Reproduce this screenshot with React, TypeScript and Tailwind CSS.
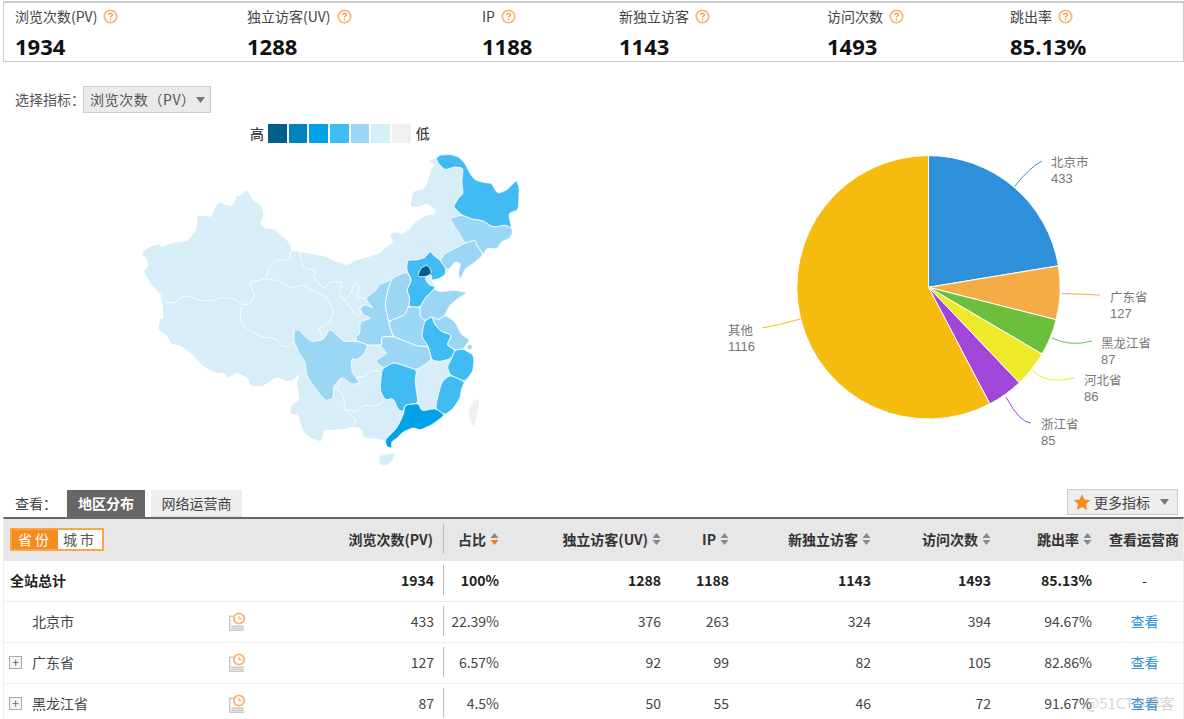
import React from 'react';

const CJK = '"Noto Sans CJK SC", "Noto Sans", sans-serif';

const stats = [
  { name: '浏览次数(PV)', value: '1934' },
  { name: '独立访客(UV)', value: '1288' },
  { name: 'IP', value: '1188' },
  { name: '新独立访客', value: '1143' },
  { name: '访问次数', value: '1493' },
  { name: '跳出率', value: '85.13%' },
];

const legend = ['#005f8b', '#0082bd', '#00a3e8', '#40bcf2', '#9bd7f5', '#d7edf8', '#f0f0f0'];

// 地图坐标按 3 倍放大量取，viewBox 1200x990
const L1 = '#d7edf8';
const L2 = '#9bd7f5';
const L3 = '#40bcf2';

function toPoints(s: string) {
  return s.trim().split(/\s+/).map((p) => p.split(',').map(Number));
}

// 只磨圆拐角，相邻省份的公共边保持重合
function smooth(s: string, closed: boolean) {
  const pts = toPoints(s);
  const n = pts.length;
  const lerp = (a: number[], b: number[]) => `${a[0] + (b[0] - a[0]) * 0.25} ${a[1] + (b[1] - a[1]) * 0.25}`;
  let d = '';
  if (closed) {
    pts.forEach((p, i) => {
      const prev = pts[(i + n - 1) % n];
      const next = pts[(i + 1) % n];
      d += `${i === 0 ? 'M' : 'L'}${lerp(p, prev)}Q${p[0]} ${p[1]} ${lerp(p, next)}`;
    });
    return d + 'Z';
  }
  d = `M${pts[0][0]} ${pts[0][1]}`;
  for (let i = 1; i < n - 1; i++) {
    d += `L${lerp(pts[i], pts[i - 1])}Q${pts[i][0]} ${pts[i][1]} ${lerp(pts[i], pts[i + 1])}`;
  }
  return d + `L${pts[n - 1][0]} ${pts[n - 1][1]}`;
}

const silhouette =
  '38,320 60,305 85,297 95,305 110,300 130,293 150,292 172,288 185,272 198,255 203,235 200,212 225,212 245,216 250,195 268,170 285,180 305,183 315,170 318,155 335,150 350,135 360,150 368,165 393,180 400,205 398,222 390,235 402,250 430,252 450,268 470,285 482,300 483,318 510,322 550,328 590,335 610,348 640,355 650,362 680,345 720,335 750,325 770,305 790,295 780,268 800,262 820,268 840,250 860,228 890,212 915,208 918,195 890,175 870,185 840,185 850,140 885,130 895,105 905,70 915,58 895,50 918,40 930,30 960,28 985,35 1005,55 1020,85 1035,105 1060,112 1085,115 1095,135 1105,145 1130,135 1145,120 1160,105 1168,130 1165,195 1135,205 1145,250 1148,262 1140,280 1115,290 1100,312 1070,310 1060,330 1030,355 1005,372 1000,385 990,405 985,385 992,355 975,350 960,370 945,390 925,402 905,405 915,425 912,432 930,440 975,435 1012,443 985,460 960,480 945,510 975,530 995,570 1020,585 1008,600 1000,612 1030,630 1032,650 1028,680 1005,710 995,730 990,760 970,790 945,810 905,840 870,855 850,848 820,860 800,880 785,890 785,910 770,905 765,885 745,882 700,878 695,850 665,845 640,852 610,855 580,855 575,890 545,880 520,860 505,810 480,805 485,780 510,765 500,720 510,685 490,705 470,708 440,695 400,722 360,722 355,700 320,682 290,700 285,685 250,682 215,660 190,630 150,600 125,598 110,570 85,555 90,520 100,525 100,490 90,445 65,420 40,378 55,365 50,340 38,330';

const borders = [
  '483,318 478,345 440,345 415,372 410,402 355,412 375,450 360,478 335,478 310,460 275,458 245,468 200,465 185,455 160,455 130,475 105,470 90,445',
  '335,478 330,520 345,548 395,575 440,582 455,605 475,605 492,590',
  '410,402 450,408 485,430 520,420 555,440 595,458 612,510 585,545 565,545 580,585',
  '510,322 520,370 560,375 548,398 585,432 600,410 640,412 625,440 640,465 665,490 680,515 695,505 685,490 705,478',
  '640,465 655,458 675,415 690,420 680,455 705,460',
  '635,695 620,730 640,750 645,795 680,825 665,845',
  '645,795 680,800 700,780 735,785 765,765',
  '690,715 680,695 700,695 725,675 750,680',
];

const provinces: { fill: string; pts: string }[] = [
  { fill: L3, pts: '918,40 930,30 960,28 985,35 1005,55 1020,85 1035,105 1060,112 1085,115 1095,135 1105,145 1130,135 1145,120 1160,105 1168,130 1165,195 1135,205 1145,250 1125,240 1105,245 1085,245 1060,228 1045,225 1025,222 995,210 970,185 985,160 1000,145 995,110 1000,70 975,65 945,75 925,55' },
  { fill: L2, pts: '960,220 995,210 1025,222 1045,225 1060,228 1085,245 1105,245 1125,240 1145,250 1148,262 1140,280 1115,290 1100,312 1070,310 1060,330 1040,300 1035,285 1005,295 985,260 970,240' },
  { fill: L2, pts: '1005,295 1035,285 1040,300 1060,330 1030,355 1005,372 1000,385 990,405 985,385 992,355 975,350 960,370 948,372 930,345 945,325' },
  { fill: L3, pts: '830,375 832,345 860,345 885,338 900,318 915,335 930,345 948,372 945,390 925,402 905,405 915,425 912,432 885,460 870,487 835,485 840,460 830,435 845,405' },
  { fill: L2, pts: '785,400 830,380 845,405 830,435 840,460 835,485 825,510 775,530 765,480 772,440' },
  { fill: L2, pts: '705,460 740,435 745,420 775,408 785,400 772,440 765,480 775,530 790,575 755,575 755,600 715,600 678,588 678,575 690,565 690,530 725,520 700,510 690,490 705,478 730,490' },
  { fill: L2, pts: '870,487 885,460 912,432 930,440 975,435 1012,443 985,460 960,480 945,510 925,525 905,515 885,528 870,515' },
  { fill: L2, pts: '775,530 825,510 835,485 870,487 870,515 885,528 900,530 880,545 875,575 895,605 860,603 830,590 790,575' },
  { fill: L2, pts: '905,515 925,525 945,510 975,530 995,570 1020,585 1008,600 1000,612 975,615 950,600 965,570 935,560 915,540' },
  { fill: L3, pts: '885,528 905,515 915,540 935,560 965,570 950,600 975,615 965,640 930,650 905,645 895,605 875,575 880,545' },
  { fill: L2, pts: '755,600 755,575 790,575 830,590 860,603 895,605 905,645 860,675 830,665 790,652 760,670 735,648 772,625 750,600' },
  { fill: L2, pts: '492,555 510,555 520,570 545,590 580,585 600,550 640,590 678,588 715,600 700,630 680,645 665,640 665,680 690,715 665,718 635,695 610,725 610,760 585,768 545,715 530,690 525,650 510,630 492,590' },
  { fill: L3, pts: '760,670 790,652 830,665 860,675 855,710 865,775 825,780 820,800 805,795 790,760 765,765 750,735 755,680' },
  { fill: L3, pts: '975,615 1000,612 1030,630 1032,650 1028,680 1005,710 960,690 952,665 965,640' },
  { fill: L3, pts: '960,690 1005,710 995,730 990,760 970,790 945,810 915,790 935,710' },
  { fill: '#00a3e8', pts: '825,780 865,775 875,798 915,790 945,810 905,840 870,855 850,848 820,860 800,880 785,890 785,910 770,905 765,885 800,850 820,810' },
  { fill: L1, pts: '885,397 905,390 905,405 915,425 898,420 890,410' },
  { fill: '#005f8b', pts: '872,370 890,360 900,370 905,385 888,395 862,395' },
  { fill: L1, pts: '750,930 795,922 790,945 765,965 745,955' },
  { fill: '#f0f0f0', pts: '1035,762 1050,762 1045,800 1032,848 1015,825 1015,790' },
];

function ChinaMap() {
  return (
    <svg width="400" height="330" viewBox="0 0 1200 990">
      <path d={smooth(silhouette, true)} fill={L1} />
      {borders.map((b, i) => (
        <path key={i} d={smooth(b, false)} fill="none" stroke="#fff" strokeWidth="2.5" />
      ))}
      {provinces.map((p, i) => (
        <path key={i} d={smooth(p.pts, true)} fill={p.fill} stroke="#fff" strokeWidth="2.5" strokeLinejoin="round" />
      ))}
      <circle cx="1019" cy="606" r="7" fill={L2} />
    </svg>
  );
}

const pieData = [
  { name: '北京市', value: 433, color: '#2e90db' },
  { name: '广东省', value: 127, color: '#f5ac46' },
  { name: '黑龙江省', value: 87, color: '#6bbf3c' },
  { name: '河北省', value: 86, color: '#eeea2a' },
  { name: '浙江省', value: 85, color: '#a047d9' },
  { name: '其他', value: 1116, color: '#f5bb0e' },
];

const pieLabels = [
  { line: 'M295 41Q310 22 322 16', x: 331, y: 22, color: '#2e90db', i: 0 },
  { line: 'M342 148.500L380 150', x: 390, y: 157, color: '#f5ac46', i: 1 },
  { line: 'M332 193Q350 202 372 196', x: 381, y: 203, color: '#6bbf3c', i: 2 },
  { line: 'M312 225Q325 240 354 233', x: 364, y: 240, color: '#eeea2a', i: 3 },
  { line: 'M286 252Q300 278 311 278', x: 321, y: 284, color: '#a047d9', i: 4 },
  { line: 'M80 174Q60 180 42 183', x: 8, y: 190, color: '#f5bb0e', i: 5 },
];

function Pie() {
  const cx = 208.5;
  const cy = 142.3;
  const r = 131.7;
  const total = pieData.reduce((s, p) => s + p.value, 0);
  let acc = 0;
  const wedges = pieData.map((p) => {
    const a0 = (acc / total) * Math.PI * 2;
    acc += p.value;
    const a1 = (acc / total) * Math.PI * 2;
    const large = a1 - a0 > Math.PI ? 1 : 0;
    const d = `M${cx} ${cy}L${cx + r * Math.sin(a0)} ${cy - r * Math.cos(a0)}A${r} ${r} 0 ${large} 1 ${cx + r * Math.sin(a1)} ${cy - r * Math.cos(a1)}Z`;
    return <path key={p.name} d={d} fill={p.color} stroke="#fff" strokeWidth="1" />;
  });
  return (
    <svg width="440" height="310" viewBox="0 0 440 310">
      {wedges}
      {pieLabels.map((l) => (
        <g key={l.i}>
          <path d={l.line} fill="none" stroke={l.color} strokeWidth="1" />
          <text x={l.x} y={l.y} fontSize="12.500" fill="#777" fontFamily={CJK}>
            {pieData[l.i].name}
          </text>
          <text x={l.x} y={l.y + 16} fontSize="13" fill="#777" fontFamily='"Liberation Sans", sans-serif'>
            {pieData[l.i].value}
          </text>
        </g>
      ))}
    </svg>
  );
}

function HelpIcon() {
  return (
    <svg width="15" height="15" viewBox="0 0 15 15" className="ml-[6px] shrink-0">
      <circle cx="7.5" cy="7.500" r="6.200" fill="#fff" stroke="#f9b873" strokeWidth="1.800" />
      <path d="M5.500 6Q5.700 4.300 7.500 4.300Q9.400 4.300 9.400 5.800Q9.400 6.800 8.300 7.300Q7.500 7.700 7.500 8.700" fill="none" stroke="#f0953c" strokeWidth="1.200" />
      <circle cx="7.500" cy="10.600" r=".8" fill="#f0953c" />
    </svg>
  );
}

function SortIcon({ active }: { active?: boolean }) {
  return (
    <svg width="9" height="14" viewBox="0 0 9 14" className="ml-[4px] shrink-0">
      <path d="M.5 6L4.500 1 8.500 6Z" fill="#888" />
      <path d="M.5 8L4.500 13 8.500 8Z" fill={active ? '#f47a20' : '#888'} />
    </svg>
  );
}

function ReportIcon() {
  return (
    <svg width="18" height="20" viewBox="0 0 18 20">
      <path d="M1 3.500H5V5H2.500V17.500H16V19H1Z" fill="#c9c9c9" />
      <path d="M3 13H16V18H3Z" fill="#e4e4e4" />
      <path d="M4 14.500H15M4 16.500H15" stroke="#c9c9c9" strokeWidth="1" />
      <circle cx="11" cy="6.500" r="5.200" fill="#fff" stroke="#f8b36c" strokeWidth="1.800" />
      <path d="M11 3.800V6.800H13.500" fill="none" stroke="#f59a45" strokeWidth="1" />
    </svg>
  );
}

function PlusBox() {
  return (
    <span className="flex h-[13px] w-[13px] items-center justify-center border border-[#aaa] bg-[#f4f4f4] text-[12px] leading-none text-[#666]">
      +
    </span>
  );
}

const rows = [
  { name: '北京市', plus: false, pv: '433', share: '22.39%', uv: '376', ip: '263', nuv: '324', visits: '394', bounce: '94.67%' },
  { name: '广东省', plus: true, pv: '127', share: '6.57%', uv: '92', ip: '99', nuv: '82', visits: '105', bounce: '82.86%' },
  { name: '黑龙江省', plus: true, pv: '87', share: '4.5%', uv: '50', ip: '55', nuv: '46', visits: '72', bounce: '91.67%' },
];

const gridCols = 'grid grid-cols-[220px_30px_189px_56px_162px_68px_142px_120px_101px_91px] items-center';

function HeadCell({ children, active }: { children: React.ReactNode; active?: boolean }) {
  return (
    <div className="flex items-center justify-end">
      {children}
      <SortIcon active={active} />
    </div>
  );
}

function Divider({ children }: { children: React.ReactNode }) {
  return <div className="flex h-[30px] items-center justify-end border-l border-[#bbb]">{children}</div>;
}

export default function App() {
  return (
    <div className="relative h-[719px] w-[1184px] overflow-hidden bg-white text-[#333]" style={{ fontFamily: CJK }}>
      {/* 顶部统计 */}
      <div className="ml-[3px] mt-[1px] grid h-[61px] w-[1181px] grid-cols-[232px_235px_137px_208px_183px_1fr] border border-t-2 border-[#ccc] pl-[11px]">
        {stats.map((s) => (
          <div key={s.name} className="flex flex-col">
            <div className="mt-[3px] flex h-[20px] items-center text-[14px] text-[#444]">
              {s.name}
              <HelpIcon />
            </div>
            <div className="mt-[6px] text-[22px] font-bold leading-[28px] text-[#111]" style={{ fontFamily: '"Open Sans", sans-serif' }}>
              {s.value}
            </div>
          </div>
        ))}
      </div>

      {/* 选择指标 */}
      <div className="ml-[15px] mt-[24px] flex h-[27px] items-center text-[14px] text-[#555]">
        <span className="w-[68px] whitespace-nowrap">选择指标：</span>
        <div className="flex h-[27px] w-[128px] items-center justify-between border border-[#ccc] bg-[#eaeaea] pl-[6px] pr-[9px] text-[14px] tracking-[0.6px] text-[#555]">
          <span className="whitespace-nowrap">浏览次数（PV）</span>
          <svg width="9" height="6" viewBox="0 0 9 6" className="shrink-0">
            <path d="M0 0H9L4.500 6Z" fill="#777" />
          </svg>
        </div>
      </div>

      {/* 地图和饼图 */}
      <div className="mt-[10px] flex h-[362px]">
        <div className="ml-[130px] w-[590px]">
          <div className="flex h-[22px] items-center pb-[1px]">
            <span className="mb-[2px] ml-[120px] mr-[4px] text-[14px] font-medium leading-none text-[#444]">高</span>
            <div className="flex gap-[2px]">
              {legend.map((c) => (
                <span key={c} className="h-[19px] w-[18.7px]" style={{ background: c }} />
              ))}
            </div>
            <span className="mb-[2px] ml-[5px] text-[14px] font-medium leading-none text-[#444]">低</span>
          </div>
          <ChinaMap />
        </div>
        <div className="pt-[22px]">
          <Pie />
        </div>
      </div>

      {/* 标签 */}
      <div className="ml-[15px] mr-[6px] mt-[4px] flex h-[28px] items-end justify-between">
        <div className="flex items-end">
          <span className="mb-[3px] w-[52px] whitespace-nowrap text-[14px] text-[#444]">查看：</span>
          <div className="flex h-[27px] w-[78px] items-center justify-center bg-[#666] text-[14px] font-bold text-white">地区分布</div>
          <div className="ml-[6px] flex h-[27px] w-[91px] items-center justify-center border-b border-[#ddd] bg-[#eee] text-[14px] text-[#444]">网络运营商</div>
        </div>
        <div className="mb-[2px] flex h-[26px] w-[111px] items-center border border-[#ccc] bg-[#eee] pl-[5px] text-[14px] text-[#444]">
          <svg width="18" height="18" viewBox="0 0 24 24" className="mr-[3px] shrink-0">
            <path d="M12 1.500L15.300 8.700 23 9.500 17.300 14.800 18.900 22.500 12 18.600 5.100 22.500 6.700 14.800 1 9.500 8.700 8.700Z" fill="#f58a1f" />
          </svg>
          更多指标
          <svg width="9" height="6" viewBox="0 0 9 6" className="ml-[10px] shrink-0">
            <path d="M0 0H9L4.500 6Z" fill="#777" />
          </svg>
        </div>
      </div>

      {/* 表格 */}
      <div className="ml-[3px] w-[1181px] border-l border-r border-t-2 border-[#eee] border-t-[#666]">
        <div className={`${gridCols} h-[42px] bg-[#e7e7e7] pb-[2px] text-[14px] font-bold text-[#333]`}>
          <div className="pl-[6px]">
            <div className="flex h-[23px] w-[94px] border-2 border-[#f9a64a] bg-white text-[14px] font-normal tracking-[3px]">
              <span className="flex w-[46px] items-center justify-center bg-[#f58c1e] text-white">省份</span>
              <span className="flex flex-1 items-center justify-center text-[#555]">城市</span>
            </div>
          </div>
          <div />
          <div className="whitespace-nowrap pr-[10px] text-right">浏览次数(PV)</div>
          <Divider>
            <HeadCell active>占比</HeadCell>
          </Divider>
          <HeadCell>独立访客(UV)</HeadCell>
          <HeadCell>IP</HeadCell>
          <HeadCell>新独立访客</HeadCell>
          <HeadCell>访问次数</HeadCell>
          <HeadCell>跳出率</HeadCell>
          <div className="whitespace-nowrap pl-[13px] text-center">查看运营商</div>
        </div>

        <div className={`${gridCols} h-[41px] border-b border-[#eee] pb-[2px] text-[14px] font-bold text-[#222]`}>
          <div className="pl-[6px]">全站总计</div>
          <div />
          <div className="pr-[9px] text-right">1934</div>
          <Divider>100%</Divider>
          <div className="text-right">1288</div>
          <div className="text-right">1188</div>
          <div className="text-right">1143</div>
          <div className="text-right">1493</div>
          <div className="text-right">85.13%</div>
          <div className="pl-[14px] text-center font-normal">-</div>
        </div>

        {rows.map((r) => (
          <div key={r.name} className={`${gridCols} h-[41px] border-b border-[#eee] pb-[2px] text-[14px] text-[#444]`}>
            <div className="flex items-center pl-[5px]">
              <span className="w-[23px]">{r.plus && <PlusBox />}</span>
              <span>{r.name}</span>
            </div>
            <div className="pl-[4px] pt-[2px]">
              <ReportIcon />
            </div>
            <div className="pr-[9px] text-right">{r.pv}</div>
            <Divider>{r.share}</Divider>
            <div className="text-right">{r.uv}</div>
            <div className="text-right">{r.ip}</div>
            <div className="text-right">{r.nuv}</div>
            <div className="text-right">{r.visits}</div>
            <div className="text-right">{r.bounce}</div>
            <div className="pl-[14px] text-center text-[#2e90db]">查看</div>
          </div>
        ))}
      </div>

      {/* 水印 */}
      <div className="absolute left-[1085px] top-[692px] text-[15px] text-[#999] opacity-40">@51CTO博客</div>
    </div>
  );
}
